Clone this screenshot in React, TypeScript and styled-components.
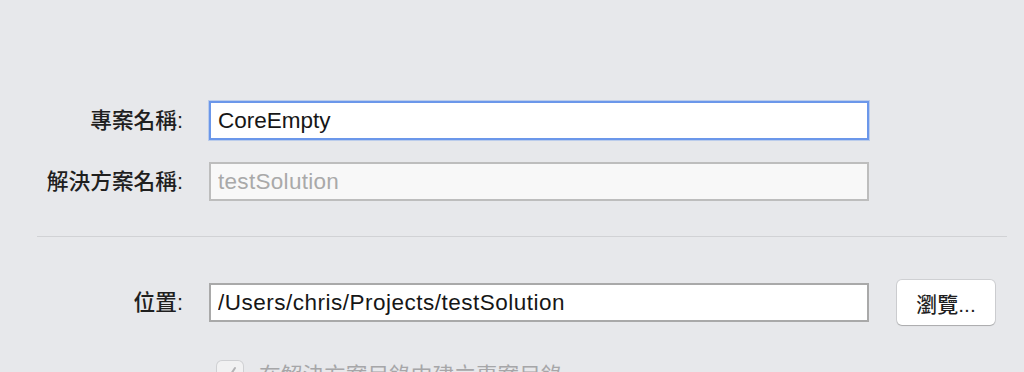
import styled, { createGlobalStyle } from 'styled-components';

type FieldProps = {
    focused?: boolean;
    disabled?: boolean;
    tracking?: number;
};

const GlobalStyle = createGlobalStyle`
    html, body {
        margin: 0;
        padding: 0;
        background: #e7e8eb;
        overflow: hidden;
    }

    * {
        box-sizing: border-box;
    }
`;

const Page = styled.div`
    width: 1024px;
    height: 372px;
    padding: 101px 17px 0 37px;
    display: flex;
    flex-direction: column;
    font-family: "Liberation Sans", "Noto Sans CJK TC", sans-serif;
    color: #1f1f1f;
    overflow: hidden;

    & > * {
        flex: none;
    }
`;

const Section = styled.div`
    display: flex;
    flex-direction: column;
    gap: 22px;
`;

const Row = styled.div`
    display: grid;
    grid-template-columns: 146px 660px auto;
    column-gap: 26px;
    align-items: center;
`;

const Label = styled.label`
    text-align: right;
    font-size: 21.7px;
    line-height: 24px;
    font-weight: 500;
    white-space: nowrap;
    color: #1f1f1f;
`;

const Field = styled.input<FieldProps>`
    width: 660px;
    height: 39px;
    padding: 0 7px;
    margin: 0;
    font-family: "Liberation Sans", sans-serif;
    font-size: 22.5px;
    letter-spacing: ${(props) => props.tracking ?? 0}px;
    color: ${(props) => (props.disabled ? '#a9a9a9' : '#161616')};
    background: ${(props) => (props.disabled ? '#f8f8f8' : '#ffffff')};
    border: 2px solid ${(props) => (props.focused ? '#6b97ea' : props.disabled ? '#bdbdbd' : '#a9a9a9')};
    border-radius: 0;
    outline: none;
    box-shadow: ${(props) =>
        props.focused ? '0 0 0 1px rgba(107, 151, 234, 0.35)' : 'none'};
    -webkit-text-fill-color: currentColor;
    opacity: 1;
`;

const Divider = styled.div`
    height: 1px;
    background: #d1d2d5;
    margin: 35px 0 43px;
`;

const BrowseButton = styled.button`
    width: 98px;
    height: 45px;
    margin-left: 2px;
    background: #ffffff;
    border: none;
    border-radius: 5px;
    box-shadow: 0 0 0 1px rgba(0, 0, 0, 0.1), 0 1px 1px rgba(0, 0, 0, 0.18);
    font-family: "Liberation Sans", "Noto Sans CJK TC", sans-serif;
    font-size: 21px;
    font-weight: 500;
    color: #1f1f1f;
    padding: 0;
`;

const CheckRow = styled.div`
    display: flex;
    align-items: center;
    gap: 16px;
    margin: 33px 0 0 180px;
    color: #a6a6a8;
    font-size: 21.7px;
    white-space: nowrap;
`;

const CheckBox = styled.span`
    width: 26px;
    height: 26px;
    flex: none;
    display: flex;
    align-items: center;
    justify-content: center;
    background: #f1f1f2;
    border-radius: 5px;
    box-shadow: 0 0 0 1px rgba(0, 0, 0, 0.1);
`;

const CheckMark = () => (
    <svg width="18" height="18" viewBox="0 0 18 18" fill="none">
        <path d="M3.5 9.5 L7 13.5 L14 3" stroke="#b3b3b5" strokeWidth="2" strokeLinecap="round" strokeLinejoin="round" />
    </svg>
);

const App = () => {
    return (
        <Page>
            <GlobalStyle />
            <Section>
                <Row>
                    <Label>專案名稱:</Label>
                    <Field focused readOnly value="CoreEmpty" />
                </Row>
                <Row>
                    <Label>解決方案名稱:</Label>
                    <Field disabled readOnly value="testSolution" tracking={0.3} />
                </Row>
            </Section>
            <Divider />
            <Row>
                <Label>位置:</Label>
                <Field readOnly value="/Users/chris/Projects/testSolution" tracking={0.5} />
                <BrowseButton>瀏覽...</BrowseButton>
            </Row>
            <CheckRow>
                <CheckBox>
                    <CheckMark />
                </CheckBox>
                <span>在解決方案目錄中建立專案目錄。</span>
            </CheckRow>
        </Page>
    );
};

export default App;
